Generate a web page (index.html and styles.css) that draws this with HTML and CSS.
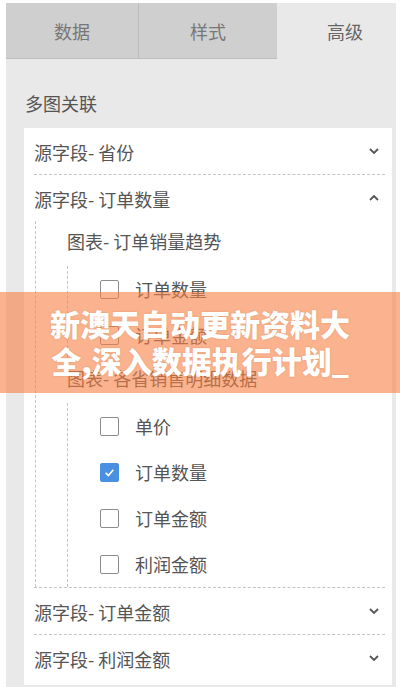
FILE: index.html
```html
<!DOCTYPE html>
<html lang="zh">
<head>
<meta charset="utf-8">
<link rel="stylesheet" href="styles.css">
</head>
<body>
<div class="panel">
  <div class="tabs">
    <div class="tab">数据</div>
    <div class="tab tab-mid">样式</div>
    <div class="tab tab-active">高级</div>
  </div>
  <div class="section-title">多图关联</div>
  <div class="card">
    <div class="field">
      <div class="field-head"><span>源字段- 省份</span>
        <svg class="chev" viewBox="0 0 10 6"><path d="M1 1 L5 5 L9 1"/></svg></div>
    </div>
    <div class="field field-open">
      <div class="field-head"><span>源字段- 订单数量</span>
        <svg class="chev" viewBox="0 0 10 6"><path d="M1 5 L5 1 L9 5"/></svg></div>
      <div class="field-body">
        <div class="chart">
          <div class="chart-head">图表- 订单销量趋势</div>
          <div class="chart-items">
            <div class="item"><span class="box"></span><span>订单数量</span></div>
            <div class="item"><span class="box"></span><span>订单金额</span></div>
          </div>
        </div>
        <div class="chart">
          <div class="chart-head">图表- 各省销售明细数据</div>
          <div class="chart-items">
            <div class="item"><span class="box"></span><span>单价</span></div>
            <div class="item"><span class="box box-on"><svg viewBox="0 0 20 20"><path d="M5.5 10.5 L8.7 13.5 L14.5 6.8"/></svg></span><span>订单数量</span></div>
            <div class="item"><span class="box"></span><span>订单金额</span></div>
            <div class="item"><span class="box"></span><span>利润金额</span></div>
          </div>
        </div>
      </div>
    </div>
    <div class="field">
      <div class="field-head"><span>源字段- 订单金额</span>
        <svg class="chev" viewBox="0 0 10 6"><path d="M1 1 L5 5 L9 1"/></svg></div>
    </div>
    <div class="field field-last">
      <div class="field-head"><span>源字段- 利润金额</span>
        <svg class="chev" viewBox="0 0 10 6"><path d="M1 1 L5 5 L9 1"/></svg></div>
    </div>
  </div>
</div>
<div class="banner">新澳天自动更新资料大<br>全,深入数据执行计划_</div>
</body>
</html>
```

FILE: styles.css
```css
html, body {
  margin: 0;
  padding: 0;
  background: #ffffff;
  width: 400px;
  height: 687px;
  overflow: hidden;
}
body {
  font-family: "Noto Sans CJK SC", "Noto Sans", sans-serif;
  color: #555;
}
.panel {
  margin: 3px 4px 0 6px;
  background: #e9e9e9;
  height: 684px;
}
.tabs {
  display: grid;
  grid-template-columns: 132px 139px 1fr;
  height: 56px;
}
.tab {
  background: #cfcfcf;
  border-bottom: 1px solid #bdbdbd;
  font-size: 18px;
  color: #777;
  display: flex;
  align-items: center;
  justify-content: center;
}
.tab-mid {
  border-left: 1px solid #bdbdbd;
}
.tab-active {
  background: #e9e9e9;
  border-bottom: none;
  padding-left: 17px;
  color: #666;
}
.section-title {
  padding: 32px 0 0 19px;
  font-size: 18px;
  line-height: 24px;
  height: 37px;
  color: #555;
}
.card {
  background: #ffffff;
  margin: 0 4px 0 18px;
  padding: 0 7px 4px 10px;
}
.field {
  border-bottom: 1px dashed #c4c4c4;
}
.field-last {
  border-bottom: none;
}
.field-head {
  height: 46px;
  display: flex;
  align-items: center;
  justify-content: space-between;
  font-size: 18px;
  color: #555;
  padding-right: 6px;
}
.field-head span {
  position: relative;
  top: 1px;
}
.chev {
  width: 10px;
  height: 6px;
  fill: none;
  stroke: #555;
  stroke-width: 1.8;
}
.field-body {
  border-left: 1px dashed #c4c4c4;
  margin-left: 1px;
  padding-left: 31px;
}
.chart-head {
  height: 45px;
  line-height: 40px;
  font-size: 18px;
  color: #555;
}
.chart-items {
  border-left: 1px dashed #c4c4c4;
  padding-left: 32px;
}
.item {
  height: 46px;
  display: flex;
  align-items: center;
  gap: 16px;
  font-size: 18px;
  color: #555;
}
.box {
  width: 17px;
  height: 17px;
  border: 1.5px solid #8c8c8c;
  border-radius: 2px;
  flex: none;
  display: block;
  background: #fff;
}
.box-on {
  background: #4a90e2;
  border-color: #4a90e2;
}
.box-on svg {
  display: block;
  width: 17px;
  height: 17px;
  fill: none;
  stroke: #fff;
  stroke-width: 2;
}
.banner {
  position: absolute;
  left: 0;
  top: 292px;
  width: 400px;
  height: 101px;
  background: rgba(246, 128, 66, 0.6);
  color: #ffffff;
  font-weight: 900;
  font-size: 30px;
  line-height: 37px;
  text-align: center;
  display: flex;
  align-items: center;
  justify-content: center;
  padding-bottom: 2px;
  box-sizing: border-box;
  text-shadow: 0 0 2px rgba(150, 70, 30, 0.25);
}
```
